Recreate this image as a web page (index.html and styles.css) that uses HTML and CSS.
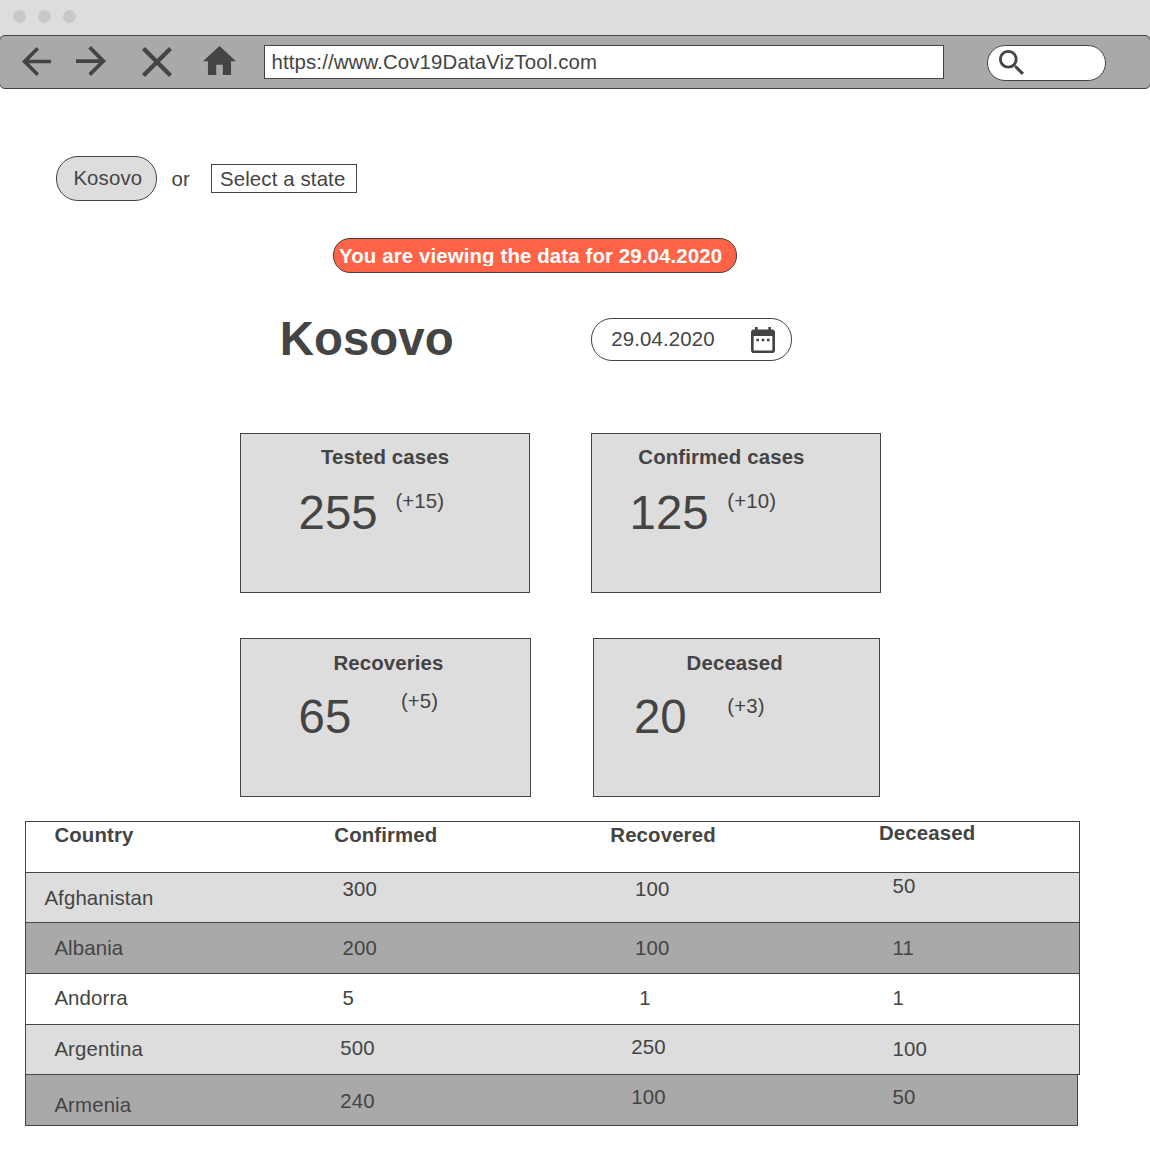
FILE: index.html
```html
<!DOCTYPE html>
<html lang="en">
<head>
<meta charset="utf-8">
<title>Cov19 Data Viz Tool</title>
<link rel="stylesheet" href="styles.css">
</head>
<body>
<header class="browser">
  <div class="window-bar"><span class="dot"></span><span class="dot"></span><span class="dot"></span></div>
  <nav class="toolbar">
    <svg class="icon back" viewBox="4 4 16 16" preserveAspectRatio="none"><path d="M20 11H7.83l5.59-5.59L12 4l-8 8 8 8 1.41-1.41L7.83 13H20v-2z"/></svg>
    <svg class="icon forward" viewBox="4 4 16 16" preserveAspectRatio="none"><path d="M12 4l-1.41 1.41L16.17 11H4v2h12.17l-5.58 5.59L12 20l8-8z"/></svg>
    <svg class="icon stop" viewBox="5 5 14 14" preserveAspectRatio="none"><path d="M19 6.41L17.59 5 12 10.59 6.41 5 5 6.41 10.59 12 5 17.59 6.41 19 12 13.41 17.59 19 19 17.59 13.41 12z"/></svg>
    <svg class="icon home" viewBox="2 3 20 17" preserveAspectRatio="none"><path d="M10 20v-6h4v6h5v-8h3L12 3 2 12h3v8z"/></svg>
    <div class="address">https://www.Cov19DataVizTool.com</div>
    <div class="search"><svg class="icon" viewBox="3 3 17.49 17.49"><path d="M15.5 14h-.79l-.28-.27C15.41 12.59 16 11.11 16 9.5 16 5.91 13.09 3 9.5 3S3 5.91 3 9.5 5.91 16 9.5 16c1.61 0 3.09-.59 4.23-1.57l.27.28v.79l5 4.99L20.49 19l-4.99-5zm-6 0C7.01 14 5 11.99 5 9.5S7.01 5 9.5 5 14 7.01 14 9.5 11.99 14 9.5 14z"/></svg></div>
  </nav>
</header>
<main>
  <section class="picker">
    <div class="pill">Kosovo</div>
    <span class="or">or</span>
    <div class="select">Select a state</div>
  </section>
  <div class="banner"><div class="banner-text">You are viewing the data for 29.04.2020</div></div>
  <section class="heading">
    <h1>Kosovo</h1>
    <div class="date"><span>29.04.2020</span><svg class="icon" viewBox="3 2 18 20" preserveAspectRatio="none"><path d="M9 11H7v2h2v-2zm4 0h-2v2h2v-2zm4 0h-2v2h2v-2zm2-7h-1V2h-2v2H8V2H6v2H5c-1.11 0-1.99.9-1.99 2L3 20c0 1.1.89 2 2 2h14c1.1 0 2-.9 2-2V6c0-1.1-.9-2-2-2zm0 16H5V9h14v11z"/></svg></div>
  </section>
  <section class="cards">
    <article class="card tested"><h2>Tested cases</h2><div class="figures"><span class="total">255</span><span class="delta">(+15)</span></div></article>
    <article class="card confirmed"><h2>Confirmed cases</h2><div class="figures"><span class="total">125</span><span class="delta">(+10)</span></div></article>
    <article class="card recoveries"><h2>Recoveries</h2><div class="figures"><span class="total">65</span><span class="delta">(+5)</span></div></article>
    <article class="card deceased"><h2>Deceased</h2><div class="figures"><span class="total">20</span><span class="delta">(+3)</span></div></article>
  </section>
  <section class="table">
    <div class="row head"><b>Country</b><b>Confirmed</b><b>Recovered</b><b>Deceased</b></div>
    <div class="row light afghanistan"><span>Afghanistan</span><span>300</span><span>100</span><span>50</span></div>
    <div class="row dark albania"><span>Albania</span><span>200</span><span>100</span><span>11</span></div>
    <div class="row andorra"><span>Andorra</span><span>5</span><span>1</span><span>1</span></div>
    <div class="row light argentina"><span>Argentina</span><span>500</span><span>250</span><span>100</span></div>
    <div class="row dark armenia"><span>Armenia</span><span>240</span><span>100</span><span>50</span></div>
  </section>
</main>
</body>
</html>
```
FILE: styles.css
```css
* { box-sizing: border-box; }
body {
  margin: 0;
  background: #fff;
  color: #444;
  font: 20.4px/24px "Liberation Sans", Arial, sans-serif;
  letter-spacing: 0.13px;
  white-space: nowrap;
  overflow: hidden;
}
.icon { display: block; fill: #444; flex: none; }

/* Browser chrome */
.browser { height: 89px; background: linear-gradient(#ddd 60px, #fff 60px); }
.window-bar { display: flex; gap: 12px; height: 35px; padding: 10px 0 0 13px; }
.dot { width: 13px; height: 13px; border-radius: 50%; background: #c8c8c8; }
.toolbar {
  display: flex;
  align-items: flex-start;
  height: 54px;
  margin: 0 -1px;
  background: #a9a9a9;
  border: 1px solid #444;
  border-radius: 6px;
}
.back { width: 29px; height: 29px; margin: 11px 0 0 22px; }
.forward { width: 30px; height: 30px; margin: 10px 0 0 25.3px; }
.stop { width: 30px; height: 30px; margin: 11px 0 0 35.7px; }
.home { width: 33px; height: 29px; margin: 10.4px 0 0 31.5px; }
.address {
  width: 680px; height: 34px;
  margin: 9px 0 0 27.5px;
  padding: 4px 0 0 6.5px;
  background: #fff;
  border: 1px solid #444;
}
.search {
  width: 119px; height: 36px;
  margin: 9px 0 0 43px;
  padding: 4px 0 0 11px;
  background: #fff;
  border: 1px solid #444;
  border-radius: 18px;
}
.search .icon { width: 25px; height: 25px; }

/* State picker */
.picker { display: flex; align-items: flex-start; margin: 67px 0 0 56px; }
.pill {
  width: 101px; height: 45px;
  padding: 9px 0 0 16.4px;
  background: #ddd;
  border: 1px solid #444;
  border-radius: 22px;
}
.or { margin: 11px 0 0 14.5px; width: 39.5px; }
.select { width: 146px; height: 29px; margin-top: 8px; padding: 2px 0 0 8px; border: 1px solid #444; }

.banner {
  width: 404px; height: 35px;
  margin: 37px 0 0 333px;
  padding: 5px 0 0 5px;
  background: #ff6347;
  border: 1px solid #444;
  border-radius: 17px;
  color: #fff;
  font-weight: bold;
}
.banner-text { height: 22px; overflow: hidden; }

.heading { display: flex; align-items: flex-start; height: 43px; margin: 45px 0 0 279.8px; }
h1 { width: 311.2px; margin: -7px 0 0; font-size: 47.4px; line-height: 56px; letter-spacing: 0; }
.date {
  display: flex;
  align-items: flex-start;
  width: 201px; height: 43px;
  padding: 8px 0 0 19.3px;
  border: 1px solid #444;
  border-radius: 21px;
}
.date span { width: 139.7px; }
.date .icon { width: 24px; height: 26px; }

/* Summary cards */
.cards {
  display: grid;
  grid-template-columns: 351px 290px;
  grid-template-rows: 160px 159px;
  row-gap: 45px;
  margin: 72px 0 0 240px;
}
.card { width: 290px; padding-top: 11px; background: #ddd; border: 1px solid #444; }
.card h2 { margin: 0; font-size: inherit; line-height: 24px; }
.figures { display: flex; align-items: flex-start; margin-top: 15px; }
.total { margin-top: 1px; font-size: 47.4px; line-height: 56px; letter-spacing: 0; }
.tested h2 { padding-left: 80px; }
.tested .total { width: 96.8px; }
.tested .figures { padding-left: 57.6px; }
.tested .delta, .confirmed .delta { margin-top: 5px; }
.confirmed h2 { padding-left: 46.3px; }
.confirmed .figures { padding-left: 37.6px; }
.confirmed .total { width: 97.7px; }
.recoveries { width: 291px; }
.recoveries, .deceased { padding-top: 12px; }
.recoveries .figures, .deceased .figures { margin-top: 13px; }
.recoveries h2 { padding-left: 92.4px; }
.recoveries .figures { padding-left: 57.6px; }
.recoveries .total { width: 102.3px; }
.recoveries .delta { margin-top: 1px; }
.deceased { width: 287px; margin-left: 2px; }
.deceased h2 { padding-left: 92.6px; }
.deceased .figures { padding-left: 40px; }
.deceased .total { width: 93.3px; }
.deceased .delta { margin-top: 6px; }

/* Country table */
.table { width: 1055px; margin: 24px 0 0 25px; }
.row {
  display: grid;
  grid-template-columns: 308.3px 276px 268.3px 1fr;
  align-items: start;
  height: 52px;
  border: 1px solid #444;
}
.row + .row { margin-top: -1px; }
.row > * { margin-left: 8.3px; }
.row > :first-child { margin-left: 28.4px; }
.row > :nth-child(3) { margin-left: 24.7px; }
.row > :nth-child(4) { margin-left: 14px; }
.light { background: #ddd; }
.dark { background: #a9a9a9; }
.row.head > * { margin: 1px 0 0; }
.row.head > :first-child { margin-left: 28.4px; }
.row.head > :last-child { margin: -1px 0 0 0.4px; }
.afghanistan { height: 51px; }
.afghanistan > * { padding-top: 4px; }
.afghanistan > :first-child { margin-left: 18.4px; padding-top: 13px; }
.afghanistan > :last-child { padding-top: 1px; }
.albania > * { padding-top: 13px; }
.andorra > * { padding-top: 12px; }
.row.andorra > :nth-child(3) { margin-left: 29px; }
.argentina { height: 51px; }
.argentina > * { padding-top: 12px; }
.argentina > :nth-child(2) { margin-left: 5.9px; padding-top: 11px; }
.argentina > :nth-child(3) { margin-left: 21px; padding-top: 10px; }
.armenia { width: 1053px; }
.armenia > * { padding-top: 10px; }
.armenia > :first-child { padding-top: 18px; }
.armenia > :nth-child(2) { margin-left: 5.9px; padding-top: 14px; }
.armenia > :nth-child(3) { margin-left: 21px; }
```
